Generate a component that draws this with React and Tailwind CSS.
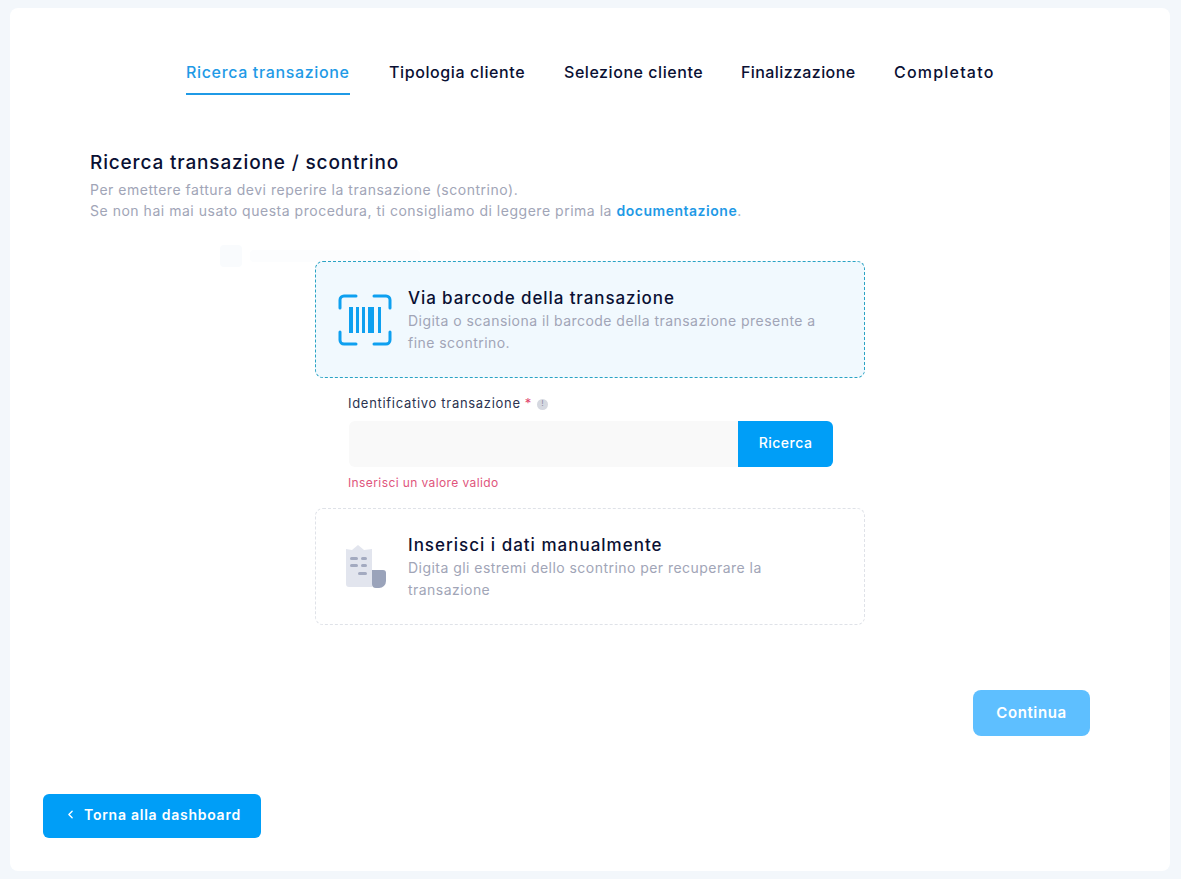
import { ChevronLeft } from "lucide-react";

const FONT = "font-['Inter','Noto_Sans',sans-serif]";

const STEPS = [
  { label: "Ricerca transazione", width: "w-[164px]", tracking: "tracking-[0.65px]", active: true },
  { label: "Tipologia cliente", width: "w-[136px]", tracking: "tracking-[0.6px]" },
  { label: "Selezione cliente", width: "w-[138px]", tracking: "tracking-[0.55px]" },
  { label: "Finalizzazione", width: "w-[114px]", tracking: "tracking-[0.4px]" },
  { label: "Completato", width: "w-[100px]", tracking: "tracking-[1.2px]" },
];

const BarcodeIcon = () => (
  <svg width="54" height="54" viewBox="0 0 54 54" fill="none" className="shrink-0">
    <g stroke="#0ea0f0" strokeWidth="3" strokeLinecap="round" fill="none">
      <path d="M2 15V7a4 4 0 0 1 4-4h12" />
      <path d="M36 3h12a4 4 0 0 1 4 4v8" />
      <path d="M2 39v8a4 4 0 0 0 4 4h12" />
      <path d="M52 39v8a4 4 0 0 1-4 4H36" />
    </g>
    <g fill="#0ea0f0">
      <rect x="11" y="14" width="4" height="26" />
      <rect x="18" y="14" width="3" height="26" />
      <rect x="24" y="14" width="3" height="26" />
      <rect x="30" y="14" width="6" height="26" />
      <rect x="40" y="14" width="3" height="26" />
    </g>
  </svg>
);

const ReceiptIcon = () => (
  <svg width="42" height="46" viewBox="0 0 42 46" fill="none" className="shrink-0">
    <path d="M1 5l6 1 6-5 6 5 8-1v38H4a3 3 0 0 1-3-3z" fill="#e2e5ee" />
    <g fill="#a3aac0">
      <rect x="5" y="13" width="8" height="3" rx="1.5" />
      <rect x="16" y="13" width="6" height="3" rx="1.5" />
      <rect x="5" y="20" width="8" height="3" rx="1.5" />
      <rect x="16" y="20" width="6" height="3" rx="1.5" />
      <rect x="13" y="28" width="9" height="3" rx="1.5" />
    </g>
    <path d="M27 26h11a3 3 0 0 1 3 3v8a7 7 0 0 1-7 7h-3a4 4 0 0 1-4-4z" fill="#9aa3ba" />
  </svg>
);

const OptionCard = ({ icon, title, text, selected, titleTracking }) => (
  <div
    className={`flex items-center w-[550px] h-[117px] rounded-lg border border-dashed pl-[22px] pr-4 ${
      selected ? "bg-[#f1f9fe] border-[#2aa3c4]" : "bg-white border-[#dfe2e8]"
    }`}
  >
    <div className="w-[70px] flex shrink-0">{icon}</div>
    <div>
      <h3 className={`pt-[1px] text-[17px] leading-[24px] font-medium text-[#0a1033] ${titleTracking}`}>{title}</h3>
      <p className="max-w-[422px] text-[14px] leading-[22px] tracking-[0.46px] text-[#a1a5b7]">{text}</p>
    </div>
  </div>
);

export default function App() {
  return (
    <div className={`min-h-[879px] bg-[#f3f7fb] pt-2 pb-2 pl-[10px] pr-[11px] ${FONT}`}>
      <div className="relative h-[863px] bg-white rounded-lg flex flex-col">
        {/* Faded hint behind the first card */}
        <div className="absolute left-[210px] top-[237px] flex items-center gap-2">
          <div className="w-[22px] h-[22px] rounded bg-[#f9fbfd]" />
          <div className="w-[170px] h-[12px] rounded bg-[#fcfdfe]" />
        </div>

        {/* Steps */}
        <div className="flex justify-start gap-[39px] pl-[176px] pt-[50px]">
          {STEPS.map((s) => (
            <div
              key={s.label}
              className={`${s.width} ${s.tracking} h-[37px] whitespace-nowrap text-[16px] leading-[28px] font-medium ${
                s.active ? "text-[#1f9ae6] border-b-2 border-[#1f9ae6]" : "text-[#0a1033]"
              }`}
            >
              {s.label}
            </div>
          ))}
        </div>

        {/* Heading */}
        <div className="relative pl-[80px] pt-[55px]">
          <h2 className="text-[19px] leading-[26px] tracking-[0.85px] font-medium text-[#0a1033]">
            Ricerca transazione / scontrino
          </h2>
          <p className="mt-[3px] text-[14px] leading-[21px] tracking-[0.52px] text-[#a1a5b7]">
            Per emettere fattura devi reperire la transazione (scontrino).
            <br />
            Se non hai mai usato questa procedura, ti consigliamo di leggere prima la{" "}
            <span className="font-semibold text-[#1f9ae6]">documentazione</span>.
          </p>
        </div>

        {/* Options */}
        <div className="relative pl-[305px] pt-[40px]">
          <OptionCard
            selected
            icon={<BarcodeIcon />}
            title="Via barcode della transazione"
            titleTracking="tracking-[0.9px]"
            text="Digita o scansiona il barcode della transazione presente a fine scontrino."
          />

          <div className="pl-[33px] pt-[16px]">
            <div className="flex items-center h-[20px] text-[13px] tracking-[0.7px] text-[#2b3350]">
              Identificativo transazione
              <span className="ml-1 text-[#e0456b]">*</span>
              <span className="ml-[5px] flex items-center justify-center w-[11px] h-[11px] rounded-full bg-[#d5d8e0] text-[7px] tracking-normal text-[#7e8299]">
                !
              </span>
            </div>
            <div className="flex mt-[7px] ml-[1px] w-[484px] h-[46px]">
              <div className="flex-1 bg-[#f9f9f9] rounded-l-md" />
              <button className="w-[95px] pb-1 bg-[#009ef7] text-white text-[14px] tracking-[0.5px] font-medium rounded-r-md">
                Ricerca
              </button>
            </div>
            <p className="mt-[7px] text-[12px] leading-[18px] tracking-[0.4px] text-[#e0557c]">
              Inserisci un valore valido
            </p>
          </div>

          <div className="pt-[16px]">
            <OptionCard
              icon={
                <div className="pl-[7px]">
                  <ReceiptIcon />
                </div>
              }
              title="Inserisci i dati manualmente"
              titleTracking="tracking-[1px]"
              text="Digita gli estremi dello scontrino per recuperare la transazione"
            />
          </div>
        </div>

        {/* Continue */}
        <div className="flex justify-end pr-[80px] pt-[65px]">
          <button className="w-[117px] h-[46px] rounded-lg bg-[#5ebfff] text-white text-[15px] tracking-[0.6px] font-semibold">
            Continua
          </button>
        </div>

        {/* Back */}
        <div className="pl-[33px] pt-[58px]">
          <button className="flex items-center w-[218px] h-[44px] pb-1 rounded-md bg-[#009ef7] text-white text-[14px] tracking-[0.75px] font-semibold pl-[21px]">
            <ChevronLeft size={13} strokeWidth={2.5} />
            <span className="ml-[7px]">Torna alla dashboard</span>
          </button>
        </div>
      </div>
    </div>
  );
}
